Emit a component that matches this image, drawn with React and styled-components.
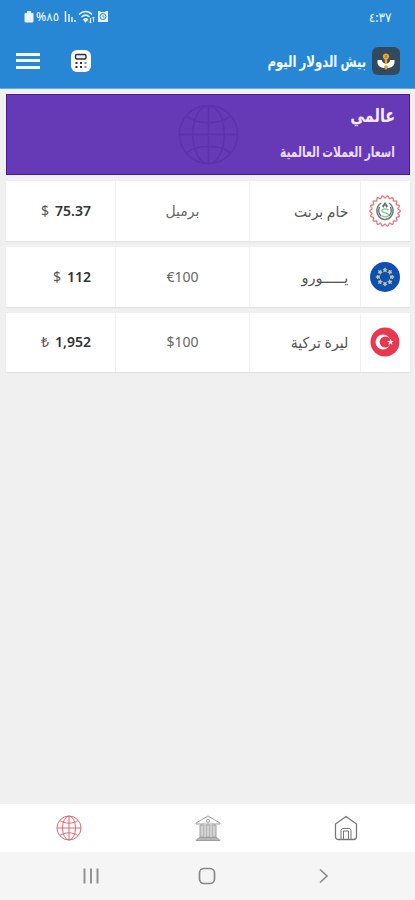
import React from 'react'
import styled, { createGlobalStyle } from 'styled-components';

const rates = [
    { id: 'brent', name: 'خام برنت', nameScale: 0.93, unit: 'برميل', rtlUnit: true, symbol: '$', price: '75.37', Icon: GearIcon },
    { id: 'eur', name: 'يـــــورو', nameScale: 0.97, unit: '€100', symbol: '$', price: '112', Icon: EuroFlag },
    { id: 'try', name: 'ليرة تركية', nameScale: 0.94, unit: '$100', symbol: '₺', price: '1,952', Icon: TurkeyFlag },
];

function GearIcon() {
    const points = [];
    for (let i = 0; i < 144; i++) {
        const angle = (i * Math.PI) / 72;
        const r = 14.2 + 1.1 * Math.cos(angle * 18);
        points.push(`${(16 + r * Math.cos(angle)).toFixed(2)},${(16 + r * Math.sin(angle)).toFixed(2)}`);
    }
    return (
        <svg width="32" height="32" viewBox="0 0 32 32" fill="none">
            <polygon points={points.join(' ')} stroke="#e8777c" strokeWidth="1.3" />
            <path d="M12 8C7.500 11 6.500 17 10 21.500C12 24 14 24.500 16 24.500C18 24.500 20 24 22 21.500C25.500 17 24.500 11 20 8" stroke="#777d7c" strokeWidth="1.500" />
            <path d="M10.500 12C9 16 10 19 12 21M21.500 12C23 16 22 19 20 21" stroke="#596b66" strokeWidth="1.200" />
            <path d="M16 7L13 11L14.500 13L16 10L17.500 13L19 11Z" fill="#63736c" />
            <path d="M19.500 15C18 13.500 13 13.500 13 16C13 18.500 19.500 17 19.500 20C19.500 22 14.500 22.500 12.500 20.500" stroke="#8fce9d" strokeWidth="1.500" />
        </svg>
    )
}

function EuroFlag() {
    return (
        <svg width="32" height="32" viewBox="0 0 32 32">
            <circle cx="16" cy="16" r="15" fill="#0d4fb3" />
            {[0, 45, 90, 135, 180, 225, 270, 315].map((deg) => (
                <path
                    key={deg}
                    transform={`rotate(${deg} 16 16)`}
                    d="M16 6.800L16.600 8.200L18 8.400L17 9.400L17.300 10.900L16 10.100L14.700 10.900L15 9.400L14 8.400L15.400 8.200Z"
                    fill="#c5c89b"
                    stroke="#c5c89b"
                    strokeWidth=".7"
                />
            ))}
        </svg>
    )
}

function TurkeyFlag() {
    return (
        <svg width="32" height="32" viewBox="0 0 32 32">
            <circle cx="16" cy="16" r="14.500" fill="#e8374f" />
            <circle cx="14" cy="16" r="7.500" fill="#fff" />
            <circle cx="16.300" cy="16" r="5.600" fill="#e8374f" />
            <path d="M21.500 12.800L22.400 15L24.700 15.100L22.900 16.600L23.500 18.900L21.500 17.600L19.500 18.900L20.100 16.600L18.300 15.100L20.600 15Z" fill="#fff" />
        </svg>
    )
}

function Globe({ size, color, width }) {
    return (
        <svg width={size} height={size} viewBox="0 0 26 26" fill="none" stroke={color} strokeWidth={width}>
            <circle cx="13" cy="13" r="12" />
            <ellipse cx="13" cy="13" rx="6.500" ry="12" />
            <path d="M13 1V25M1 13H25M4 5.500C8.500 9 17.500 9 22 5.500M4 20.500C8.500 17 17.500 17 22 20.500" />
        </svg>
    )
}

function Logo() {
    return (
        <svg width="28" height="28" viewBox="0 0 28 28">
            <rect width="28" height="28" rx="6" fill="#34495a" />
            <path d="M5.500 13H10C10 15 11.500 16.500 14 16.500C16.500 16.500 18 15 18 13H22.500V15C22.500 19 19.500 21 14 21C8.500 21 5.500 19 5.500 15Z" fill="#fff" />
            <circle cx="14" cy="9.500" r="3.100" fill="#e7a631" />
            <path d="M12.800 11H15.200V17H12.800ZM11.500 20L14 18L16.500 20L14 23Z" fill="#e7a631" />
            <path d="M14 8V11" stroke="#85683a" strokeWidth=".8" />
        </svg>
    )
}

function StatusIcons() {
    return (
        <StatusGroup>
            <svg width="10" height="13" viewBox="0 0 10 13" fill="#e8f5ff">
                <path d="M3 1H7V3H8.500Q9.500 3 9.500 4V11Q9.500 12.500 8 12.500H2Q.5 12.500 .5 11V4Q.5 3 1.500 3H3Z" />
            </svg>
            <Battery><Text $size={12} $color="#e8f5ff" $weight={500}>%٨٥</Text></Battery>
            <svg width="12" height="13" viewBox="0 0 12 13" stroke="#e8f5ff" strokeWidth="1.500">
                <path d="M1.500 1V12M5 4V12M8 7V12M11 10V12" />
            </svg>
            <svg width="17" height="14" viewBox="0 0 17 14" fill="none" stroke="#e8f5ff" strokeWidth="1.500">
                <path d="M1 4.500C5 .5 10.500 .5 14 4.500M3.500 7C6 4.500 9 4.500 11.500 7M6 9.500C7 8.500 8.500 8.500 9.500 9.500L7.500 11.500Z" />
                <path d="M12.500 8V13M15.500 7V12M11 11.500L12.500 13L13.500 12M14 8.500L15.500 7L16.500 8" strokeWidth="1" />
            </svg>
            <svg width="12" height="13" viewBox="0 0 12 13">
                <path d="M1 1H3L4 2H8L9 1H11V12H1Z" fill="#e8f5ff" />
                <circle cx="6" cy="6.500" r="3" fill="none" stroke="#2787d4" strokeWidth="1" />
                <path d="M6 5V7H7.500" fill="none" stroke="#2787d4" strokeWidth=".8" />
            </svg>
        </StatusGroup>
    )
}

function Calculator() {
    return (
        <svg width="20" height="22" viewBox="0 0 20 22">
            <rect width="20" height="22" rx="6" fill="#fff" />
            <rect x="4.500" y="4.500" width="10.500" height="4.500" rx="1.500" fill="#eee" stroke="#303030" strokeWidth="1.400" />
            <g fill="#343434">
                <rect x="4.500" y="12" width="2" height="2" />
                <rect x="9" y="12" width="2" height="2" />
                <rect x="13.500" y="12" width="2" height="2" fill="#888" />
                <rect x="4.500" y="16" width="2" height="2" />
                <rect x="9" y="16" width="2" height="2" />
                <rect x="13.500" y="16" width="2" height="2" fill="#888" />
            </g>
        </svg>
    )
}

function App() {
    return (
        <>
        <GlobalStyle />
        <Screen>
            <Header>
                <StatusBar>
                    <StatusIcons />
                    <Text $size={13} $color="#e8f5ff" $weight={500} $scale={0.93} $end>٤:٣٧</Text>
                </StatusBar>
                <Toolbar>
                    <Actions>
                        <Menu aria-label="القائمة"><i /><i /><i /></Menu>
                        <Calculator />
                    </Actions>
                    <Brand>
                        <Text as="h1" $size={16} $color="#f2f9ff" $weight={600} $scale={0.73} $end dir="rtl">بيش الدولار اليوم</Text>
                        <Logo />
                    </Brand>
                </Toolbar>
            </Header>
            <Content>
                <Banner>
                    <Watermark><Globe size={63} color="#5e31ab" width={0.6} /></Watermark>
                    <Text as="h2" $size={19} $color="#f4eaff" $weight={600} $scale={0.76} $end dir="rtl">عالمي</Text>
                    <Text as="p" $size={15} $color="#eadcff" $weight={600} $scale={0.71} $end dir="rtl">اسعار العملات العالمية</Text>
                </Banner>
                {rates.map(({ id, name, nameScale, unit, rtlUnit, symbol, price, Icon }) => (
                    <Row key={id}>
                        <Price>
                            <Text $size={14} $color="#555">{symbol}</Text>
                            <Text $size={14} $color="#333" $weight={600}>{price}</Text>
                        </Price>
                        <Unit><Text $size={14} $color="#666" dir={rtlUnit ? 'rtl' : 'ltr'}>{unit}</Text></Unit>
                        <Name><Text $size={15} $color="#555" $scale={nameScale} $end dir="rtl">{name}</Text></Name>
                        <Flag><Icon /></Flag>
                    </Row>
                ))}
            </Content>
            <Tabs>
                <Globe size={26} color="#e26a6d" width={1} />
                <svg width="26" height="27" viewBox="0 0 26 27" fill="none" stroke="#a0a0a0" strokeWidth="1">
                    <path d="M1 8L13 1L25 8V9H1Z" />
                    <circle cx="13" cy="6" r="1.500" />
                    <path d="M5 10H9V22H5ZM11 10H15V22H11ZM17 10H21V22H17Z" fill="#d2d2d2" />
                    <path d="M4 22.500H22L25 25.500H1Z" fill="#b5b5b5" />
                </svg>
                <svg width="24" height="26" viewBox="0 0 24 26" fill="none" stroke="#777" strokeWidth="1.300">
                    <path d="M12 1.500L22.500 9V21.500Q22.500 24.500 19.500 24.500H4.500Q1.500 24.500 1.500 21.500V9Z" />
                    <path d="M7 24.500V15.500Q7 13.500 9 13.500H15Q17 13.500 17 15.500V24.500M9.500 24V16H14.500V24" strokeWidth="1" />
                </svg>
            </Tabs>
            <SystemNav>
                <svg width="16" height="16" viewBox="0 0 16 16" stroke="#929292" strokeWidth="2">
                    <path d="M1.500 .5V15.500M8 .5V15.500M14.500 .5V15.500" />
                </svg>
                <svg width="18" height="18" viewBox="0 0 18 18" fill="none" stroke="#888" strokeWidth="1.700">
                    <rect x="1.500" y="1.500" width="15" height="15" rx="4.500" />
                </svg>
                <svg width="14" height="16" viewBox="0 0 14 16" fill="none" stroke="#888" strokeWidth="1.600">
                    <path d="M5 1.500L12 8L5 14.500" />
                </svg>
            </SystemNav>
        </Screen>
        </>
    )
}

const GlobalStyle = createGlobalStyle`
    * {
        box-sizing: border-box;
    }
    body {
        margin: 0;
        background: #f0f0f0;
    }
    h1, h2, p {
        margin: 0;
    }
    svg {
        display: block;
        flex: none;
    }
`

const Text = styled.span`
    display: block;
    white-space: nowrap;
    font-family: "Noto Sans", "DejaVu Sans", sans-serif;
    font-size: ${(p) => p.$size}px;
    font-weight: ${(p) => p.$weight || 400};
    line-height: 22px;
    color: ${(p) => p.$color};
    transform: scaleX(${(p) => p.$scale || 1});
    transform-origin: ${(p) => (p.$end ? 'right' : 'left')} center;
`;

const Screen = styled.div`
    width: 415px;
    height: 900px;
    display: flex;
    flex-direction: column;
    overflow: hidden;
    background: #f0f0f0;
`;

const Header = styled.header`
    height: 89px;
    background: #2787d4;
    border-bottom: 1px solid #66a9de;
`;

const StatusBar = styled.div`
    height: 33px;
    padding: 0 24px;
    display: flex;
    align-items: center;
    justify-content: space-between;
`;

const StatusGroup = styled.div`
    display: flex;
    align-items: center;
    gap: 2px;
`;

const Battery = styled.div`
    width: 26px;
`;

const Toolbar = styled.div`
    height: 55px;
    padding: 0 15px 0 16px;
    display: flex;
    align-items: center;
    justify-content: space-between;
`;

const Actions = styled.div`
    display: flex;
    align-items: center;
    gap: 31px;
`;

const Menu = styled.div`
    width: 24px;
    display: flex;
    flex-direction: column;
    gap: 3.5px;
    i {
        height: 3px;
        background: #f1f9ff;
    }
`;

const Brand = styled.div`
    display: flex;
    align-items: center;
    gap: 6px;
`;

const Content = styled.main`
    flex: 1;
    padding: 5px 5px 0 6px;
    display: flex;
    flex-direction: column;
    gap: 6px;
`;

const Banner = styled.section`
    height: 81px;
    padding: 9px 14px 0 0;
    position: relative;
    display: flex;
    flex-direction: column;
    align-items: flex-end;
    gap: 14px;
    background: #6639b6;
    border: 1px solid #5014a5;
`;

const Watermark = styled.div`
    position: absolute;
    left: 170px;
    top: 8px;
`;

const Row = styled.div`
    height: 59.8px;
    display: grid;
    grid-template-columns: 110px 134px 111px 1fr;
    background: #fff;
    box-shadow: 0 1px 1px #e2e2e2;
`;

const Cell = styled.div`
    display: flex;
    align-items: center;
    border-right: 1px solid #f2f2f2;
`;

const Price = styled(Cell)`
    justify-content: flex-end;
    padding-right: 24px;
    gap: 6px;
`;

const Unit = styled(Cell)`
    justify-content: center;
`;

const Name = styled(Cell)`
    justify-content: flex-end;
    padding-right: 12px;
`;

const Flag = styled(Cell)`
    justify-content: center;
    padding-right: 1px;
    border: 0;
`;

const Tabs = styled.nav`
    height: 48px;
    padding: 0 57px 0 56px;
    display: flex;
    align-items: center;
    justify-content: space-between;
    background: #fff;
`;

const SystemNav = styled.div`
    height: 48px;
    padding: 0 86px 0 83px;
    display: flex;
    align-items: center;
    justify-content: space-between;
    background: #f5f5f5;
`;

export default App
